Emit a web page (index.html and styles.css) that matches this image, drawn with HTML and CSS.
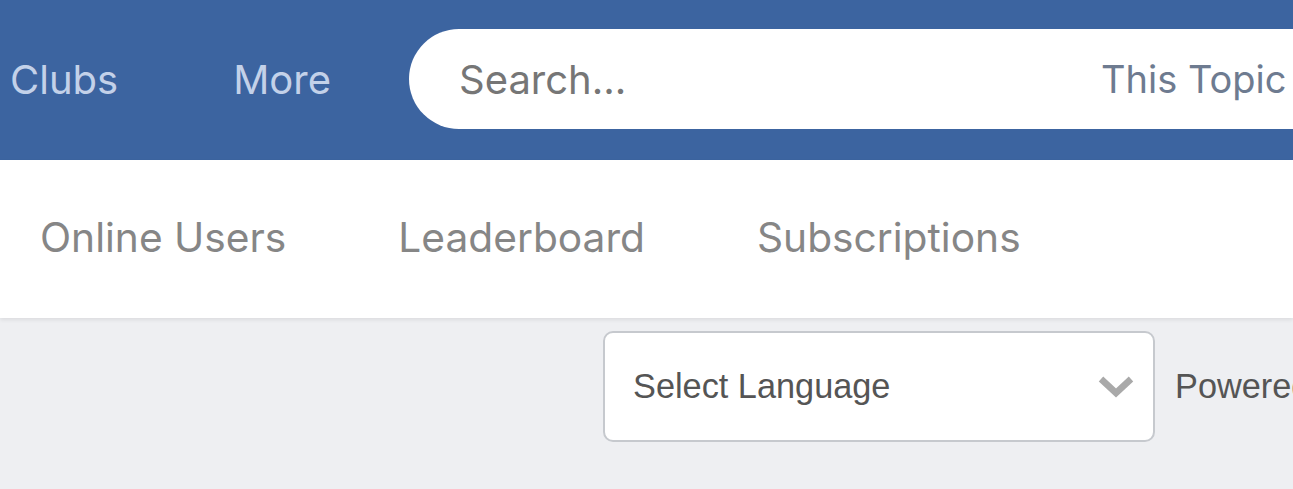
FILE: index.html
```html
<!DOCTYPE html>
<html>
<head>
<meta charset="utf-8">
<link rel="stylesheet" href="styles.css">
</head>
<body>
<header class="topbar">
  <nav class="mainnav">
    <a class="mainnav-item">Clubs</a>
    <a class="mainnav-item">More</a>
  </nav>
  <div class="search">
    <span class="search-placeholder">Search...</span>
    <span class="search-scope">This Topic</span>
  </div>
</header>
<nav class="subnav">
  <a class="subnav-item">Online Users</a>
  <a class="subnav-item">Leaderboard</a>
  <a class="subnav-item">Subscriptions</a>
</nav>
<section class="footer-area">
  <div class="lang-select">
    <span class="lang-label">Select Language</span>
    <svg class="chevron" width="36" height="22" viewBox="0 0 36 22"><path d="M3 3 L18 17 L33 3" fill="none" stroke="#a9a9a9" stroke-width="6.5" stroke-linejoin="miter"/></svg>
  </div>
  <span class="powered">Powered by</span>
</section>
</body>
</html>
```
FILE: styles.css
```css
html, body {
  margin: 0;
  padding: 0;
  overflow: hidden;
  width: 1293px;
  height: 489px;
  background: #eeeff2;
}
body {
  font-family: Inter, "Noto Sans", sans-serif;
}
.topbar {
  height: 160px;
  background: #3c64a0;
  display: flex;
  align-items: flex-start;
  white-space: nowrap;
}
.mainnav {
  display: flex;
  gap: 115px;
  padding-left: 10px;
  padding-top: 57px;
  flex-shrink: 0;
}
.mainnav-item {
  color: #c3d1e9;
  font-size: 40px;
  line-height: 46px;
}
.search {
  margin-left: 78px;
  margin-top: 29px;
  height: 100px;
  flex: 1 0 auto;
  min-width: 900px;
  background: #fff;
  border-radius: 50px 0 0 50px;
  display: flex;
  align-items: center;
  padding-left: 50px;
  box-sizing: border-box;
}
.search-placeholder {
  color: #767676;
  font-size: 40px;
  width: 642px;
}
.search-scope {
  color: #6e7b90;
  font-size: 38px;
}
.subnav {
  height: 158px;
  box-sizing: border-box;
  padding-bottom: 4px;
  background: #fff;
  box-shadow: 0 2px 4px rgba(0,0,0,0.08);
  display: flex;
  align-items: center;
  padding-left: 40px;
  gap: 112px;
  position: relative;
  white-space: nowrap;
}
.subnav-item {
  color: #868686;
  font-size: 40.7px;
}
.footer-area {
  display: flex;
  align-items: center;
  padding-left: 603px;
  padding-top: 13px;
  gap: 20px;
  white-space: nowrap;
}
.lang-select {
  width: 552px;
  height: 111px;
  box-sizing: border-box;
  border: 2px solid #c6c9ce;
  border-radius: 10px;
  background: #fff;
  display: flex;
  align-items: center;
  padding-left: 28px;
  padding-right: 19px;
  flex-shrink: 0;
}
.lang-label {
  font-family: "Liberation Sans", Arial, sans-serif;
  font-size: 34.3px;
  color: #555;
  flex: 1;
}
.chevron {
  display: block;
}
.powered {
  font-family: "Liberation Sans", Arial, sans-serif;
  font-size: 34.3px;
  color: #555;
}
```
